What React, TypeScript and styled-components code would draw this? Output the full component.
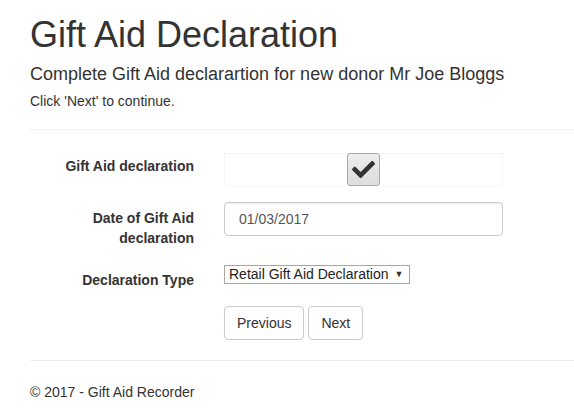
import styled, { createGlobalStyle } from "styled-components";
import { FaCheck } from "react-icons/fa";

const GlobalStyle = createGlobalStyle`
    html, body {
        margin: 0;
        padding: 0;
        background: #fff;
    }

    body {
        font-family: "Liberation Sans", Arial, sans-serif;
        font-size: 14px;
        line-height: 1.42857;
        color: #333;
    }
`;

const Container = styled.div`
    padding: 0 0 0 30px;
`;

const Title = styled.h1`
    margin: 15px 0 10px;
    font-size: 36px;
    font-weight: 500;
    line-height: 1.1;
`;

const Subtitle = styled.h4`
    margin: 0 0 8px;
    font-size: 18px;
    font-weight: 500;
    line-height: 1.1;
`;

const Lead = styled.p`
    margin: 0 0 10px;
    font-size: 14px;
`;

const Rule = styled.hr<{ $top: number; $bottom: number }>`
    margin: ${(p) => `${p.$top}px 0 ${p.$bottom}px`};
    border: 0;
    border-top: 1px solid #eee;
`;

const Form = styled.form`
    display: flex;
    flex-direction: column;
    gap: 15px;
`;

const Row = styled.div`
    display: grid;
    grid-template-columns: 164px 279px;
    column-gap: 30px;
    align-items: start;
`;

const Label = styled.label<{ $pad?: number }>`
    padding-top: ${(p) => p.$pad ?? 7}px;
    font-weight: 700;
    text-align: right;
`;

const CheckField = styled.div`
    display: flex;
    justify-content: center;
    height: 34px;
    box-sizing: border-box;
    border: 1px solid #f4f4f4;
    border-bottom-color: #fafafa;
`;

const CheckBox = styled.span`
    display: flex;
    align-items: center;
    justify-content: center;
    width: 33px;
    height: 33px;
    box-sizing: border-box;
    margin-top: -1px;
    border: 1px solid #a9a9a9;
    border-radius: 3px;
    background: linear-gradient(#ededed, #dcdcdc);
    color: #333;
`;

const TextInput = styled.input`
    height: 34px;
    box-sizing: border-box;
    padding: 6px 14px;
    border: 1px solid #ccc;
    border-radius: 4px;
    font-family: inherit;
    font-size: 14px;
    color: #555;
    box-shadow: inset 0 1px 1px rgba(0, 0, 0, 0.075);
`;

const Select = styled.div`
    display: flex;
    align-items: center;
    gap: 6px;
    justify-self: start;
    height: 19px;
    box-sizing: border-box;
    margin-top: 1px;
    padding: 0 6px 0 4px;
    border: 1px solid #a6a6a6;
    font-size: 14px;
    line-height: 17px;
    color: #222;
`;

const Caret = styled.span`
    font-size: 9px;
    color: #333;
`;

const Buttons = styled.div`
    display: flex;
    gap: 4px;
`;

const Button = styled.button`
    height: 34px;
    padding: 6px 12px;
    border: 1px solid #ccc;
    border-radius: 4px;
    background: #fff;
    font-family: inherit;
    font-size: 14px;
    color: #333;
`;

const Footer = styled.footer`
    padding-top: 2px;
`;

export default function App() {
    return (
        <Container>
            <GlobalStyle />
            <Title>Gift Aid Declaration</Title>
            <Subtitle>Complete Gift Aid declarartion for new donor Mr Joe Bloggs</Subtitle>
            <Lead>Click 'Next' to continue.</Lead>
            <Rule $top={17} $bottom={23} />
            <Form onSubmit={(e) => e.preventDefault()}>
                <Row>
                    <Label $pad={4}>Gift Aid declaration</Label>
                    <CheckField>
                        <CheckBox>
                            <FaCheck size={23} />
                        </CheckBox>
                    </CheckField>
                </Row>
                <Row>
                    <Label>Date of Gift Aid declaration</Label>
                    <TextInput defaultValue="01/03/2017" />
                </Row>
                <Row>
                    <Label>Declaration Type</Label>
                    <Select>
                        Retail Gift Aid Declaration <Caret>▼</Caret>
                    </Select>
                </Row>
                <Row>
                    <span />
                    <Buttons>
                        <Button type="button">Previous</Button>
                        <Button type="button">Next</Button>
                    </Buttons>
                </Row>
            </Form>
            <Rule $top={20} $bottom={20} />
            <Footer>© 2017 - Gift Aid Recorder</Footer>
        </Container>
    );
}
